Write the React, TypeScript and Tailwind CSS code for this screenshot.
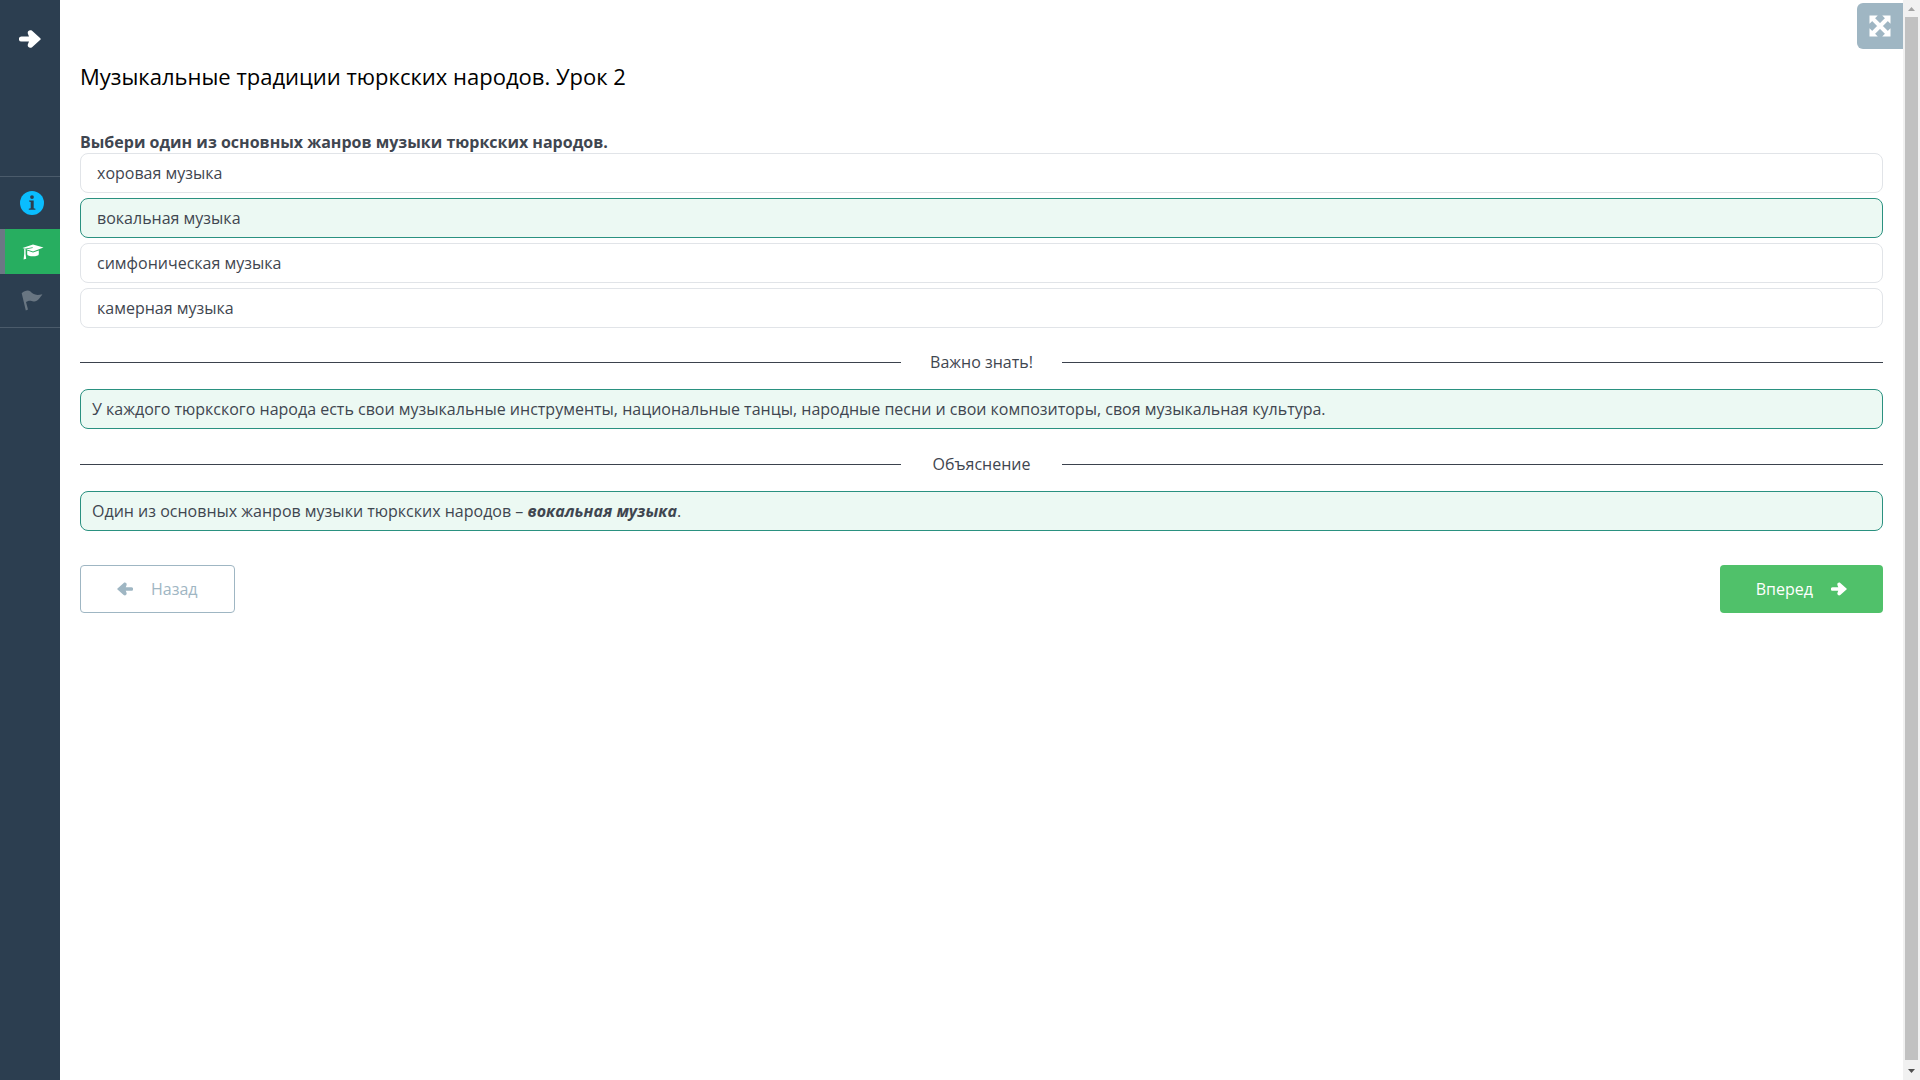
import React, { useState } from 'react';

const OPTIONS = ['хоровая музыка', 'вокальная музыка', 'симфоническая музыка', 'камерная музыка'];

interface IconProps {
    className?: string;
}

const ArrowIcon: React.FC<IconProps> = ({ className }) => (
    <svg viewBox="0 0 22 18" fill="currentColor" className={className} aria-hidden="true">
        <path d="M2.4 6.5H10L8.9 3.8C8 1.2 10.4-.8 12.8.6L21.3 8.2C21.9 8.7 21.9 9.3 21.3 9.8L12.8 17.4C10.4 18.8 8 16.8 8.9 14.2L10 11.5H2.4A2.5 2.5 0 0 1 2.4 6.5Z" />
    </svg>
);

const InfoIcon: React.FC<IconProps> = ({ className }) => (
    <svg viewBox="0 0 24 24" className={className} aria-hidden="true">
        <circle cx="12" cy="12" r="12" fill="#0abdfe" />
        <g fill="#2c3e50">
            <circle cx="12" cy="6.1" r="1.9" />
            <path d="M9.1 9.5H13.7V17.2L15.4 17.8V18.8H8.8V17.8L10.7 17.2V11.1L9.1 10.5Z" />
        </g>
    </svg>
);

const CapIcon: React.FC<IconProps> = ({ className }) => (
    <svg viewBox="0 0 22 16" fill="currentColor" className={className} aria-hidden="true">
        <path d="M11 .5L21.5 3.6L11 7.4L4.2 5.2L10.8 3.9L10.6 3.2L2.8 4.8L.5 3.9Z" />
        <path d="M5.2 6.6L11 8.6L16.8 6.6V10.2C16.8 13 5.2 13 5.2 10.2Z" />
        <path d="M2.2 5L3.6 5.3V10L4.2 14.8L1.6 15.4L2.2 10Z" />
    </svg>
);

const FlagIcon: React.FC<IconProps> = ({ className }) => (
    <svg viewBox="0 0 22 21" fill="currentColor" className={className} aria-hidden="true">
        <path d="M.7 3.2C3.6.6 7.2-.6 9.5 1.6C11.6 4 14.6 6.2 21.4 4.2C19.3 7.2 16.5 11.9 12.7 11.4C9.8 11 8.7 9.7 5 12L7 19.6L4.8 20.4Z" />
    </svg>
);

const ExpandIcon: React.FC<IconProps> = ({ className }) => (
    <svg viewBox="0 0 22 22" className={className} aria-hidden="true">
        <path d="M4 4L18 18M18 4L4 18" stroke="currentColor" strokeWidth="4" />
        <path
            d="M.5 .5H8.8L.5 8.8ZM21.5 .5V8.8L13.2 .5ZM.5 21.5V13.2L8.8 21.5ZM21.5 21.5H13.2L21.5 13.2Z"
            fill="currentColor"
        />
    </svg>
);

const Sidebar: React.FC = () => (
    <aside className="flex w-15 shrink-0 flex-col bg-[#2c3e50]">
        <div className="flex h-44 justify-center pt-[27px]">
            <button type="button" aria-label="Развернуть меню" className="h-6 cursor-pointer text-white">
                <ArrowIcon className="h-[18px] w-[22px]" />
            </button>
        </div>
        <nav className="border-y border-[#4b5b6b]">
            <a href="#info" aria-label="Информация" className="flex h-[52px] items-center justify-center pl-1">
                <InfoIcon className="h-6 w-6" />
            </a>
            <a
                href="#lesson"
                aria-label="Урок"
                className="flex h-[45px] items-center justify-center border-l-5 border-[#6b7785] bg-[#27ae60] text-white"
            >
                <CapIcon className="h-4 w-[22px]" />
            </a>
            <a href="#finish" aria-label="Завершение" className="flex h-[53px] items-center justify-center pl-1 text-[#697682]">
                <FlagIcon className="h-[21px] w-[22px]" />
            </a>
        </nav>
    </aside>
);

const Divider: React.FC<{ title: string }> = ({ title }) => (
    <div className="flex items-center">
        <span className="h-px flex-1 bg-[#3b424d]" />
        <h2 className="w-[161px] text-center">{title}</h2>
        <span className="h-px flex-1 bg-[#3b424d]" />
    </div>
);

const Note: React.FC<{ children: React.ReactNode }> = ({ children }) => (
    <p className="mt-[15px] mb-[23px] rounded-lg border border-[#2a9180] bg-[#ecf9f3] px-[11px] py-[7px]">{children}</p>
);

const ScrollTrack: React.FC = () => (
    <div aria-hidden="true" className="flex w-[17px] shrink-0 flex-col items-center bg-[#f1f1f1]">
        <svg viewBox="0 0 17 17" className="h-[17px] w-[17px] fill-[#a3a3a3]">
            <path d="M5 11L8.5 7L12 11Z" />
        </svg>
        <span className="w-[13px] flex-1 bg-[#c1c1c1]" />
        <svg viewBox="0 0 17 20" className="h-5 w-[17px] fill-[#505050]">
            <path d="M5 9H12L8.5 13Z" />
        </svg>
    </div>
);

export default function App() {
    const [answer, setAnswer] = useState(1);

    return (
        <div className="flex min-h-screen bg-white font-['Open_Sans',sans-serif] text-base leading-6 text-[#3f4650]">
            <Sidebar />
            <div className="relative min-w-0 flex-1">
                <button
                    type="button"
                    aria-label="На весь экран"
                    className="absolute top-[3px] right-0 flex h-[46px] w-[46px] cursor-pointer items-center justify-center rounded-l-md bg-[#9fb6c3] text-white"
                >
                    <ExpandIcon className="h-[22px] w-[22px]" />
                </button>
                <main className="px-5 pt-15">
                    <h1 className="text-[22px] leading-8 text-black">Музыкальные традиции тюркских народов. Урок 2</h1>
                    <fieldset className="mt-[39px]">
                        <legend className="leading-[22px] font-bold">Выбери один из основных жанров музыки тюркских народов.</legend>
                        <div className="flex flex-col gap-[5px]">
                            {OPTIONS.map((option, idx) => (
                                <label
                                    key={option}
                                    className={`cursor-pointer rounded-lg border px-4 py-[7px] ${answer === idx ? 'border-[#2a9180] bg-[#ecf9f3]' : 'border-[#e1e4e8]'}`}
                                >
                                    <input
                                        type="radio"
                                        name="answer"
                                        checked={answer === idx}
                                        onChange={() => setAnswer(idx)}
                                        className="sr-only"
                                    />
                                    {option}
                                </label>
                            ))}
                        </div>
                    </fieldset>
                    <div className="mt-[22px]">
                        <Divider title="Важно знать!" />
                        <Note>
                            У каждого тюркского народа есть свои музыкальные инструменты, национальные танцы, народные песни и свои
                            композиторы, своя музыкальная культура.
                        </Note>
                        <Divider title="Объяснение" />
                        <Note>
                            Один из основных жанров музыки тюркских народов – <strong className="font-bold italic">вокальная музыка</strong>.
                        </Note>
                    </div>
                    <div className="flex justify-between pt-[11px]">
                        <button
                            type="button"
                            className="flex h-12 cursor-pointer items-center gap-[18px] rounded-sm border border-[#9fb6c3] px-9 text-[#9fb6c3]"
                        >
                            <ArrowIcon className="h-[14px] w-4 rotate-180" />
                            Назад
                        </button>
                        <button
                            type="button"
                            className="flex h-12 cursor-pointer items-center gap-[18px] rounded-sm bg-[#50c16a] px-9 text-white"
                        >
                            Вперед
                            <ArrowIcon className="h-[14px] w-4" />
                        </button>
                    </div>
                </main>
            </div>
            <ScrollTrack />
        </div>
    );
}
